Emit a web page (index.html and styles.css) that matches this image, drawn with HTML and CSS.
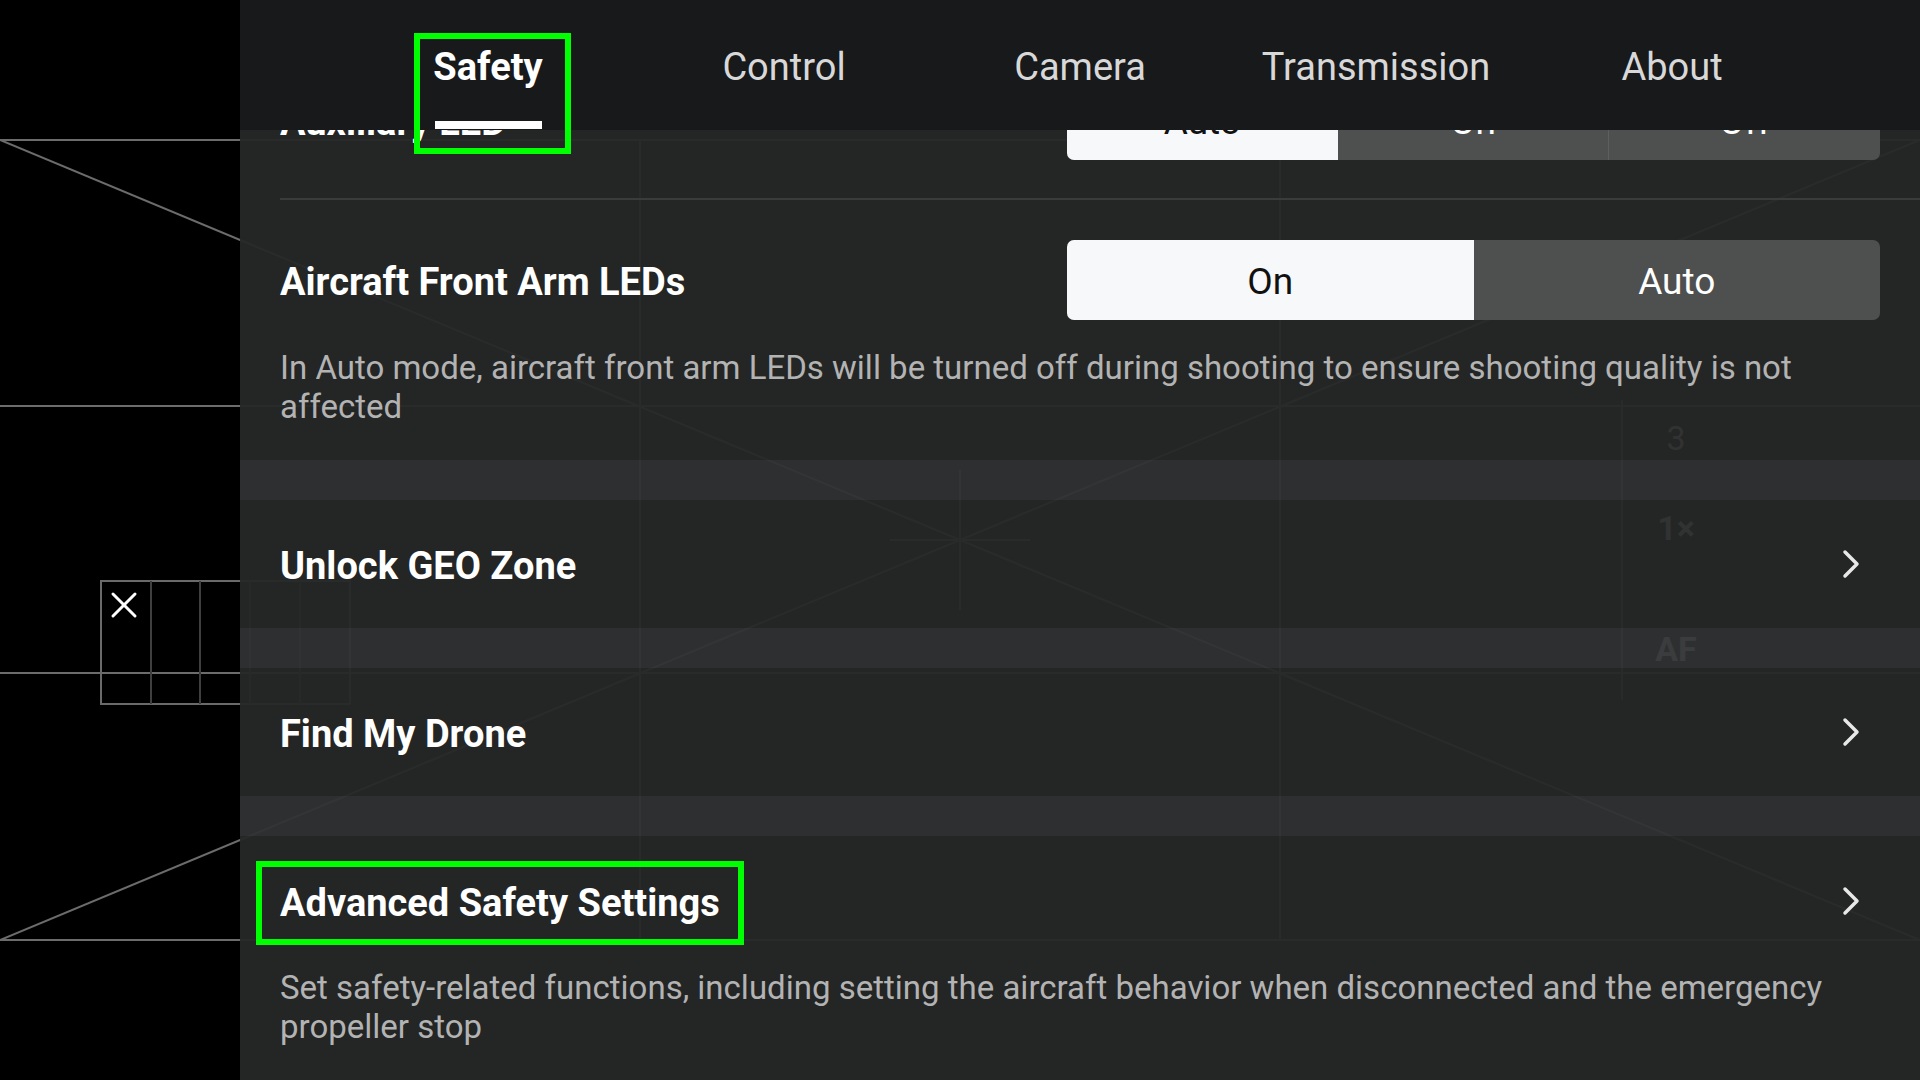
FILE: index.html
```html
<!DOCTYPE html>
<html lang="en">
<head>
<meta charset="utf-8">
<title>Safety Settings</title>
<link rel="stylesheet" href="styles.css">
</head>
<body>
<div class="camera">
  <svg class="cam-grid" width="1920" height="1080" viewBox="0 0 1920 1080">
    <g stroke="#6c6c6c" stroke-width="2" fill="none">
      <line x1="0" y1="140" x2="1920" y2="140"/>
      <line x1="0" y1="406" x2="1920" y2="406"/>
      <line x1="0" y1="673" x2="1920" y2="673"/>
      <line x1="0" y1="940" x2="1920" y2="940"/>
      <line x1="640" y1="140" x2="640" y2="940"/>
      <line x1="1280" y1="140" x2="1280" y2="940"/>
      <line x1="0" y1="140" x2="1920" y2="940"/>
      <line x1="0" y1="940" x2="1920" y2="140"/>
      <line x1="890" y1="540" x2="1030" y2="540"/>
      <line x1="960" y1="470" x2="960" y2="610"/>
      <line x1="1622" y1="400" x2="1622" y2="700"/>
    </g>
    <g fill="none">
      <path d="M101 704 V581 H350 V704 Z" stroke="#6a6a6a" stroke-width="2"/>
      <g stroke="#3f3f3f" stroke-width="2">
        <line x1="151" y1="581" x2="151" y2="704"/>
        <line x1="200" y1="581" x2="200" y2="704"/>
        <line x1="250" y1="581" x2="250" y2="704"/>
        <line x1="300" y1="581" x2="300" y2="704"/>
      </g>
      <g stroke="#ffffff" stroke-width="3" stroke-linecap="round">
        <line x1="113" y1="594" x2="135" y2="616"/>
        <line x1="135" y1="594" x2="113" y2="616"/>
      </g>
    </g>
  </svg>
  <span class="cam-label cam-3">3</span>
  <span class="cam-label cam-zoom">1×</span>
  <span class="cam-label cam-af">AF</span>
</div>

<div class="app">
  <aside class="left-view"></aside>
  <main class="panel">
    <header class="tabs">
      <div class="tab active">
        <span class="tab-text">Safety</span>
        <span class="tab-underline"></span>
        <span class="hl-box hl-tab"></span>
      </div>
      <div class="tab"><span class="tab-text">Control</span></div>
      <div class="tab"><span class="tab-text">Camera</span></div>
      <div class="tab"><span class="tab-text">Transmission</span></div>
      <div class="tab"><span class="tab-text">About</span></div>
    </header>

    <div class="scroll">
      <section class="card card-leds">
        <div class="setting-row">
          <span class="label">Auxiliary LED</span>
          <div class="seg">
            <span class="seg-item active">Auto</span>
            <span class="seg-item">On</span>
            <span class="seg-item split">Off</span>
          </div>
        </div>
        <div class="divider"></div>
        <div class="setting-row row-gap">
          <span class="label">Aircraft Front Arm LEDs</span>
          <div class="seg">
            <span class="seg-item active">On</span>
            <span class="seg-item">Auto</span>
          </div>
        </div>
        <p class="desc">In Auto mode, aircraft front arm LEDs will be turned off during shooting to ensure shooting quality is not affected</p>
      </section>

      <div class="band"></div>

      <section class="card link-row">
        <span class="label">Unlock GEO Zone</span>
        <svg class="chevron" width="18" height="30" viewBox="0 0 18 30"><path d="M3 3 L15 15 L3 27" fill="none" stroke="#e8e8e8" stroke-width="3.5" stroke-linecap="round" stroke-linejoin="round"/></svg>
      </section>

      <div class="band"></div>

      <section class="card link-row">
        <span class="label">Find My Drone</span>
        <svg class="chevron" width="18" height="30" viewBox="0 0 18 30"><path d="M3 3 L15 15 L3 27" fill="none" stroke="#e8e8e8" stroke-width="3.5" stroke-linecap="round" stroke-linejoin="round"/></svg>
      </section>

      <div class="band"></div>

      <section class="card card-adv">
        <div class="adv-head">
          <span class="label hl-wrap">Advanced Safety Settings<span class="hl-box hl-title"></span></span>
          <svg class="chevron" width="18" height="30" viewBox="0 0 18 30"><path d="M3 3 L15 15 L3 27" fill="none" stroke="#e8e8e8" stroke-width="3.5" stroke-linecap="round" stroke-linejoin="round"/></svg>
        </div>
        <p class="desc desc-adv">Set safety-related functions, including setting the aircraft behavior when disconnected and the emergency propeller stop</p>
      </section>
    </div>
  </main>
</div>
</body>
</html>
```

FILE: styles.css
```css
* {
  box-sizing: border-box;
}

html, body {
  margin: 0;
  padding: 0;
  width: 1920px;
  height: 1080px;
  overflow: hidden;
  background: #000;
  font-family: Roboto, "Liberation Sans", sans-serif;
}

.camera {
  position: absolute;
  left: 0;
  top: 0;
  width: 1920px;
  height: 1080px;
  z-index: 0;
}

.cam-grid {
  display: block;
}

.cam-label {
  position: absolute;
  color: #f2f2f2;
  font-size: 34px;
  line-height: 20px;
  width: 80px;
  text-align: center;
  left: 1636px;
}

.cam-3 { top: 428px; }
.cam-zoom { top: 518px; font-weight: 700; }
.cam-af { top: 639px; font-weight: 700; }

.app {
  position: relative;
  z-index: 1;
  display: flex;
  width: 1920px;
  height: 1080px;
}

.left-view {
  width: 240px;
  flex: none;
}

.panel {
  position: relative;
  flex: 1;
  overflow: hidden;
}

.tabs {
  position: absolute;
  top: 0;
  left: 0;
  right: 0;
  height: 130px;
  background: #18191b;
  display: flex;
  justify-content: center;
  z-index: 2;
}

.tab {
  position: relative;
  width: 296px;
  display: flex;
  align-items: center;
  justify-content: center;
  font-size: 38px;
  color: #d8d8d8;
  padding-top: 4px;
}

.tab.active {
  color: #ffffff;
  font-weight: 700;
}

.tab-underline {
  position: absolute;
  bottom: 1px;
  left: 95px;
  width: 107px;
  height: 8px;
  background: #ffffff;
}

.hl-box {
  position: absolute;
  border: 6px solid #00ff00;
  pointer-events: none;
}

.hl-tab {
  left: 74px;
  top: 33px;
  width: 157px;
  height: 121px;
}

.hl-wrap {
  position: relative;
}

.hl-title {
  left: -24px;
  right: -24px;
  top: -16px;
  bottom: -20px;
}

.scroll {
  display: flex;
  flex-direction: column;
  height: 1080px;
}

.card {
  background: rgba(38, 39, 39, 0.95);
  flex: none;
}

.band {
  height: 40px;
  flex: none;
  background: rgba(48, 49, 51, 0.95);
}

.card-leds {
  padding-top: 80px;
  padding-bottom: 34px;
}

.setting-row {
  display: flex;
  align-items: center;
  justify-content: space-between;
  height: 80px;
  padding: 0 40px;
}

.row-gap {
  margin-top: 40px;
}

.divider {
  height: 2px;
  margin: 38px 0 0 40px;
  background: #3a3b3c;
}

.label {
  font-size: 38px;
  line-height: 44px;
  padding-top: 4px;
  font-weight: 700;
  color: #ffffff;
}

.seg {
  display: flex;
  width: 813px;
  height: 80px;
  border-radius: 7px;
  overflow: hidden;
  background: #4e4f4f;
}

.seg-item {
  flex: 1;
  display: flex;
  align-items: center;
  justify-content: center;
  font-size: 37px;
  padding-top: 3px;
  color: #ffffff;
}

.seg-item.active {
  background: #f7f8fa;
  color: #111111;
}

.seg-item.split {
  border-left: 1px solid #5d5e5e;
}

.desc {
  margin: 28px 0 0;
  padding: 0 40px;
  font-size: 33px;
  line-height: 39px;
  color: #b3b3b3;
}

.link-row {
  height: 128px;
  display: flex;
  align-items: center;
  justify-content: space-between;
  padding: 0 60px 0 40px;
}

.chevron {
  display: block;
  flex: none;
}

.card-adv {
  flex: 1;
  padding: 43px 0 0 40px;
}

.adv-head {
  display: flex;
  align-items: center;
  justify-content: space-between;
  height: 44px;
  padding-right: 60px;
}

.desc-adv {
  margin-top: 45px;
  padding: 0 40px 0 0;
}
```
